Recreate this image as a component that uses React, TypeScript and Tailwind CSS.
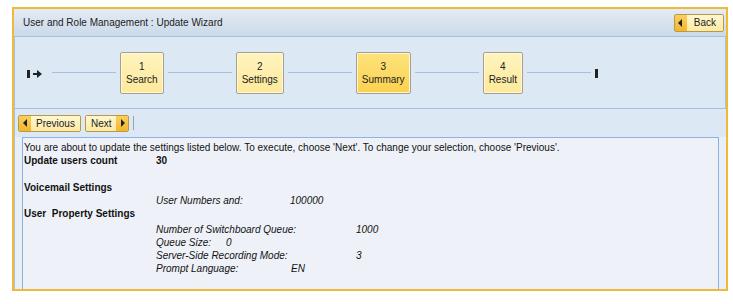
import React from "react";

const font = { fontFamily: '"Liberation Sans", Arial, sans-serif' };

function Step({ n, label, active }: { n: string; label: string; active?: boolean }) {
  return (
    <div
      className={
        "flex flex-col items-center justify-center h-[42px] px-[5px] rounded-[2px] border border-[#a8a08a] text-[10px] leading-[13px] text-[#222] shadow-[inset_0_0_0_1px_#fff8d8] " +
        (active
          ? "bg-gradient-to-b from-[#fde27a] to-[#fbd24e]"
          : "bg-gradient-to-b from-[#fff4bf] to-[#fde99a]")
      }
    >
      <span>{n}</span>
      <span>{label}</span>
    </div>
  );
}

function Line() {
  return <div className="w-[64px] h-[1px] bg-[#a9bfdc] mx-[4px]" />;
}

function TriLeft() {
  return (
    <svg width="5" height="8" viewBox="0 0 5 8">
      <path d="M4 0 L0 4 L4 8 Z" fill="#222" />
    </svg>
  );
}
function TriRight() {
  return (
    <svg width="5" height="8" viewBox="0 0 5 8">
      <path d="M1 0 L5 4 L1 8 Z" fill="#222" />
    </svg>
  );
}

export default function App() {
  return (
    <div className="w-[733px] h-[304px] bg-white pt-[7px] pl-[12px]" style={font}>
      <div className="w-[716px] h-[284px] border-2 border-[#f0b93a] flex flex-col bg-[#e9eff7]">
        {/* header */}
        <div className="h-[28px] flex items-center justify-between pl-[9px] pr-[2px] bg-gradient-to-b from-[#e4ecf5] to-[#cbd9e9] border-b border-[#a9bfdc]">
          <span className="text-[10px] text-[#222]">User and Role Management : Update Wizard</span>
          <button className="flex items-stretch h-[18px] border border-[#b9984a] rounded-[2px] overflow-hidden text-[10px] text-[#222]">
            <span className="w-[12px] flex items-center justify-center bg-gradient-to-b from-[#fbcf5c] to-[#f4b52c]">
              <TriLeft />
            </span>
            <span className="px-[7px] flex items-center bg-gradient-to-b from-[#fff7d2] to-[#fce9a2]">Back</span>
          </button>
        </div>
        {/* wizard steps */}
        <div className="h-[72px] flex items-center pl-[12px] bg-[#dce8f4] border-b border-[#a9bfdc] border-l border-l-[#a9c0de] border-r border-r-[#a9c0de]">
          <svg width="16" height="10" viewBox="0 0 16 10" className="mr-[5px] mt-[2px]">
            <rect x="0" y="1" width="3" height="8" fill="#222" />
            <path d="M6 4 H10 V1 L15 5 L10 9 V6 H6 Z" fill="#222" />
          </svg>
          <Line />
          <Step n="1" label="Search" />
          <Line />
          <Step n="2" label="Settings" />
          <Line />
          <Step n="3" label="Summary" active />
          <Line />
          <Step n="4" label="Result" />
          <Line />
          <div className="w-[3px] h-[9px] bg-[#222] mt-[1px]" />
        </div>
        {/* toolbar */}
        <div className="h-[28px] flex items-center pl-[3px] gap-[4px] bg-[#dce8f4] border-l border-[#a9c0de]">
          <button className="flex items-stretch h-[17px] border border-[#b9984a] rounded-[2px] overflow-hidden text-[10px] text-[#222]">
            <span className="w-[12px] flex items-center justify-center bg-gradient-to-b from-[#fbcf5c] to-[#f4b52c]">
              <TriLeft />
            </span>
            <span className="px-[5px] flex items-center bg-gradient-to-b from-[#fff7d2] to-[#fce9a2]">Previous</span>
          </button>
          <button className="flex items-stretch h-[17px] border border-[#b9984a] rounded-[2px] overflow-hidden text-[10px] text-[#222]">
            <span className="px-[5px] flex items-center bg-gradient-to-b from-[#fff7d2] to-[#fce9a2]">Next</span>
            <span className="w-[12px] flex items-center justify-center bg-gradient-to-b from-[#fbcf5c] to-[#f4b52c]">
              <TriRight />
            </span>
          </button>
          <div className="w-[1px] h-[14px] bg-[#8fa5c2]" />
        </div>
        {/* content */}
        <div className="flex-1 flex pl-[7px] pr-[7px] border-l border-[#a9c0de] bg-[#e9eff7]">
          <div className="flex-1 border border-b-0 border-[#8db2e3] bg-[#eef2f8] pl-[1px] pt-[3px] text-[10px] leading-[13px] text-[#111]">
            <div>You are about to update the settings listed below. To execute, choose 'Next'. To change your selection, choose 'Previous'.</div>
            <div className="flex font-bold">
              <span className="w-[132px]">Update users count</span>
              <span>30</span>
            </div>
            <div className="h-[14px]" />
            <div className="font-bold">Voicemail Settings</div>
            <div className="flex italic pl-[132px]">
              <span className="w-[134px]">User Numbers and:</span>
              <span>100000</span>
            </div>
            <div className="font-bold">User&nbsp; Property Settings</div>
            <div className="pl-[132px] italic pt-[3px]">
              <div className="flex">
                <span className="w-[200px]">Number of Switchboard Queue:</span>
                <span>1000</span>
              </div>
              <div className="flex">
                <span className="w-[70px]">Queue Size:</span>
                <span>0</span>
              </div>
              <div className="flex">
                <span className="w-[200px]">Server-Side Recording Mode:</span>
                <span>3</span>
              </div>
              <div className="flex">
                <span className="w-[135px]">Prompt Language:</span>
                <span>EN</span>
              </div>
            </div>
          </div>
        </div>
      </div>
    </div>
  );
}
